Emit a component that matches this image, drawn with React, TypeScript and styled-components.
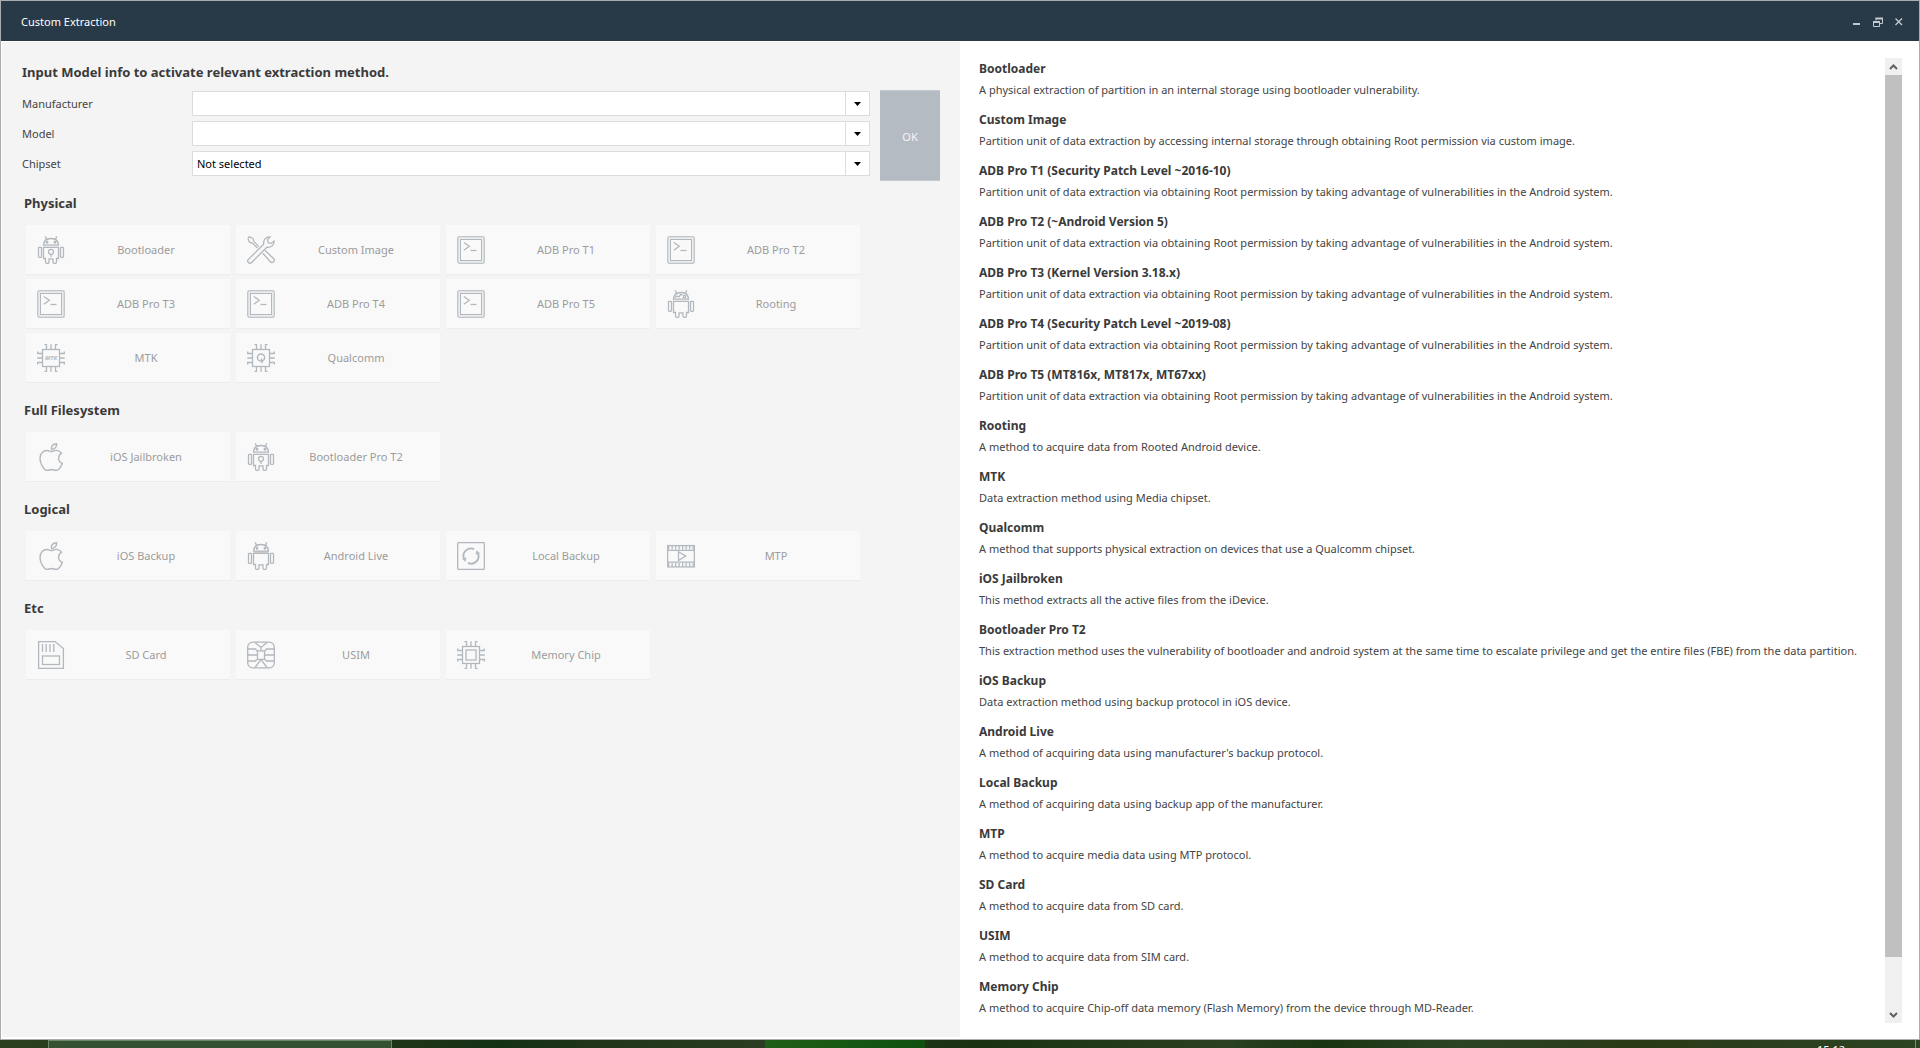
import React from "react";
import styled, { createGlobalStyle } from "styled-components";

const GlobalStyle = createGlobalStyle`
  *, *::before, *::after { box-sizing: border-box; }
  body { margin: 0; }
  body, button, select { font-family: "Noto Sans", "Open Sans", sans-serif; font-size: 11px; }
  h1, h2, h3, p, dl, dt, dd { margin: 0; }
`;

/* ---------- layout ---------- */

const Desktop = styled.div`
  display: flex;
  flex-direction: column;
  height: 100vh;
  overflow: hidden;
`;

const Window = styled.div`
  flex: 1;
  min-height: 0;
  display: flex;
  flex-direction: column;
  border: 1px solid #ababab;
  background: #fff;
`;

const TitleBar = styled.header`
  flex: none;
  display: flex;
  align-items: center;
  justify-content: space-between;
  height: 40px;
  padding: 2px 14px 0 20px;
  background: #283947;
  color: #fff;
`;

const WindowTitle = styled.h1`
  font-size: 11px;
  line-height: 20px;
  font-weight: 400;
`;

const WindowControls = styled.div`
  display: flex;
  gap: 9px;
`;

const ControlButton = styled.button`
  display: flex;
  padding: 0;
  border: 0;
  background: none;
  color: #c6cace;
`;

const Columns = styled.main`
  flex: 1;
  min-height: 0;
  display: grid;
  grid-template-columns: minmax(0, 1fr) minmax(0, 1fr);
  border-top: 1px solid #fff;
`;

const LeftPanel = styled.section`
  margin: 0 0 2px 1px;
  padding: 20px 20px 0 20px;
  background: #f4f4f4;
`;

const RightPanel = styled.section`
  display: flex;
  gap: 6px;
  min-height: 0;
  padding: 16px 17px 16px 19px;
`;

/* ---------- model form ---------- */

const FormTitle = styled.h2`
  font-size: 13px;
  line-height: 20px;
  font-weight: 700;
  color: #3a3a3a;
`;

const ModelForm = styled.form`
  display: flex;
  gap: 10px;
  margin-top: 8px;
`;

const Fields = styled.div`
  flex: 1;
  display: flex;
  flex-direction: column;
  gap: 5px;
  padding: 1px 0;
`;

const Field = styled.div`
  display: grid;
  grid-template-columns: 170px minmax(0, 1fr);
  align-items: center;
`;

const FieldLabel = styled.label`
  line-height: 20px;
  color: #444;
`;

const Combo = styled.div`
  display: grid;
`;

const ComboSelect = styled.select`
  grid-area: 1 / 1;
  appearance: none;
  width: 100%;
  height: 25px;
  padding: 0 30px 0 4px;
  border: 1px solid #dcdcdc;
  border-radius: 0;
  background: #fff;
  color: #000;
`;

const ComboArrow = styled.span`
  grid-area: 1 / 1;
  justify-self: end;
  display: flex;
  align-items: center;
  justify-content: center;
  width: 25px;
  height: 25px;
  border: 1px solid #dcdcdc;
  pointer-events: none;
`;

const OkButton = styled.button`
  width: 60px;
  height: 91px;
  padding: 2px 0 0;
  border: solid #c3c9cf;
  border-width: 1px 0;
  background: #b4bbc3;
  color: #f4f5f6;
`;

/* ---------- method groups ---------- */

const Groups = styled.div`
  display: flex;
  flex-direction: column;
  gap: 17px;
  margin-top: 12px;
  padding-left: 2px;
`;

const GroupTitle = styled.h3`
  font-size: 13px;
  line-height: 20px;
  font-weight: 700;
  color: #3a3a3a;
`;

const Tiles = styled.div`
  display: flex;
  flex-wrap: wrap;
  gap: 4px 6px;
  margin: 12px 0 0 2px;
`;

const Tile = styled.button`
  display: flex;
  align-items: center;
  width: 204px;
  height: 50px;
  padding: 0 3px 0 11px;
  border: 0;
  border-bottom: 1px solid #ececec;
  background: #f9f9f9;
  color: #9c9c9c;
`;

const TileLabel = styled.span`
  flex: 1;
  text-align: center;
  line-height: 20px;
`;

const Glyph = styled.svg`
  flex: none;
  display: block;
  fill: none;
  stroke: #b2b8bd;
  stroke-width: 1.3;
`;

/* ---------- descriptions ---------- */

const DescriptionList = styled.dl`
  flex: 1;
  min-width: 0;
  display: flex;
  flex-direction: column;
  gap: 9px;
  overflow: hidden;
  line-height: 21px;
  color: #444;
  white-space: nowrap;
`;

const Term = styled.dt`
  font-size: 12px;
  font-weight: 700;
  color: #3a3a3a;
`;

const Detail = styled.dd``;

const ScrollBar = styled.div`
  flex: none;
  display: flex;
  flex-direction: column;
  width: 17px;
  background: #f0f0f0;
`;

const ScrollArrow = styled.button`
  flex: none;
  display: flex;
  align-items: center;
  justify-content: center;
  height: 17px;
  padding: 0;
  border: 0;
  background: #f0f0f0;
`;

const ScrollTrack = styled.div`
  flex: 1;
  display: grid;
  grid-template-rows: 18fr 1fr;
`;

const ScrollThumb = styled.div`
  background: #c0c0c0;
`;

/* ---------- taskbar ---------- */

const TaskBar = styled.footer`
  flex: none;
  display: flex;
  height: 8px;
  overflow: hidden;
  background: linear-gradient(
    90deg,
    #2a3f1c 0%, #1e3416 22%, #123015 26%, #21351a 31%, #2a3d20 40%,
    #1a3112 51%, #2a4020 64%, #193411 69%, #2c4424 76%, #2a3a17 85%, #2c4422 100%
  );
`;

const TaskStart = styled.div`
  width: 48px;
`;

const ActiveTask = styled.div`
  width: 344px;
  border: 1px solid #6c8869;
  border-bottom: 0;
  background: #345232;
`;

const TaskGap = styled.div`
  width: 373px;
`;

const ProgressTask = styled.div`
  width: 160px;
  background: linear-gradient(90deg, #1f5f17, #0f5010);
`;

const Tray = styled.div`
  flex: 1;
  display: flex;
  justify-content: flex-end;
  gap: 70px;
`;

const Clock = styled.time`
  padding-top: 2px;
  line-height: 16px;
  color: #fff;
`;

const ShowDesktop = styled.div`
  width: 5px;
  border-left: 1px solid #7e8c78;
`;

/* ---------- icons ---------- */

const Icon = ({ children }: { children: React.ReactNode }) => (
  <Glyph width="28" height="28" viewBox="0 0 28 28" aria-hidden="true">
    {children}
  </Glyph>
);

const AndroidShape = () => (
  <>
    <path d="M6.5 9.2C6.7 5 9.6 2.5 14 2.5S21.300 5 21.500 9.200Z" />
    <path d="M8.300.3L9.600 3.400M19.700.3L18.400 3.400" />
    <path d="M6.500 11.300H21.500V22.500H19.500V26Q19.500 27.500 17.800 27.500T16 26V22.800H12V26Q12 27.500 10.300 27.500T8.500 26V22.500H6.500Z" />
    <rect x="1.500" y="11.300" width="3" height="10" rx=".8" />
    <rect x="23.500" y="11.300" width="3" height="10" rx=".8" />
  </>
);

const Eyes = () => (
  <>
    <circle cx="10" cy="6.300" r=".8" />
    <circle cx="18" cy="6.300" r=".8" />
  </>
);

const BootAndroidIcon = () => (
  <Icon>
    <AndroidShape />
    <Eyes />
    <circle cx="14" cy="15.800" r="2.500" />
    <path d="M14 18.300V21" />
  </Icon>
);

const LiveAndroidIcon = () => (
  <Icon>
    <AndroidShape />
    <Eyes />
    <path d="M6.500 10.200H21.500" strokeWidth="1.600" opacity=".6" />
  </Icon>
);

const RootAndroidIcon = () => (
  <Icon>
    <AndroidShape />
    <path d="M8 7.500L10 6L12 7L13.500 4.500L15.500 5" />
    <circle cx="17.500" cy="6.500" r="1.200" />
  </Icon>
);

const ToolsIcon = () => (
  <Icon>
    <path d="M1 1.800L2.200.8L6 2.400L7 5.600L11.800 10.600M15.800 17.300L23.500 25.800A2.100 2.100 0 0 0 26.700 22.700L17.800 14.200M10.500 12L5.200 7.100L2.400 6.200L.9 2.200" />
    <path d="M1.400 23.400L16.700 8.200C16 4.500 18.500.8 22.900.9L20.600 3.800L21.200 6.800L24.200 7.400L27.100 5C27.400 9.300 23.700 12 19.800 11.200L4.600 26.500A2.200 2.200 0 0 1 1.400 23.400Z" />
  </Icon>
);

const TerminalIcon = () => (
  <Icon>
    <rect x=".7" y=".7" width="26.600" height="26.600" rx="2" opacity=".8" />
    <rect x="2" y="2" width="24" height="24" strokeWidth="1.400" opacity=".25" />
    <rect x="3.500" y="3.500" width="21" height="21" strokeWidth="1" />
    <path d="M6.800 6.500L12.300 10.300L6.800 14.200" strokeWidth="1.300" />
    <path d="M13.500 14.500H19.500" strokeWidth="1.300" />
  </Icon>
);

const ChipShape = () => (
  <>
    <rect x="5.500" y="5.500" width="17" height="17" />
    <path d="M7.500.7H9.500V5.500M14 .3V5.500M20.500.7H18.500V5.500M7.500 27.300H9.500V22.500M14 27.700V22.500M20.500 27.300H18.500V22.500" />
    <path d="M.7 7.500V9.500H5.500M.3 14H5.500M.7 20.500V18.500H5.500M27.300 7.500V9.500H22.500M27.700 14H22.500M27.300 20.500V18.500H22.500" />
  </>
);

const ChipLettering = styled.text`
  font: italic 700 6px "Noto Sans", sans-serif;
  fill: #b2b8bd;
  stroke: none;
  text-anchor: middle;
`;

const MtkIcon = () => (
  <Icon>
    <ChipShape />
    <ChipLettering x="14" y="16">MTK</ChipLettering>
  </Icon>
);

const QualcommIcon = () => (
  <Icon>
    <ChipShape />
    <circle cx="14" cy="13.500" r="3.600" strokeWidth="1.500" />
    <path d="M14.300 14.500L15.500 19" strokeWidth="1.500" />
  </Icon>
);

const MemoryChipIcon = () => (
  <Icon>
    <ChipShape />
    <rect x="9" y="9" width="10" height="10" />
  </Icon>
);

const AppleIcon = () => (
  <Icon>
    <g transform="translate(2.800 -.8) scale(.059)" strokeWidth="24">
      <path d="M318.700 268.700c-.2-36.700 16.400-64.400 50-84.800-18.800-26.900-47.200-41.700-84.700-44.600-35.500-2.800-74.300 20.700-88.500 20.700-15 0-49.400-19.700-76.400-19.700C63.300 141.200 4 184.800 4 273.500q0 39.300 14.400 81.200c12.800 36.700 59 126.700 107.200 125.200 25.200-.6 43-17.900 75.800-17.900 31.800 0 48.300 17.900 76.400 17.900 48.600-.7 90.400-82.500 102.600-119.300-65.200-30.700-61.700-90-61.700-91.900z" />
      <path d="M200 122C184 70 220 28 284 26C292 78 258 118 200 122z" />
    </g>
  </Icon>
);

const SyncIcon = () => (
  <Icon>
    <rect x=".7" y=".7" width="26.600" height="26.600" rx=".5" />
    <path d="M17.200 7.200A7.500 7.500 0 0 0 6.900 16.500M10.800 20.900A7.500 7.500 0 0 0 21.200 11.800" strokeWidth="1.900" />
    <path d="M5.400 16.700L9.200 15.800L8.300 19.500ZM22.700 11.300L18.900 12.300L19.800 8.700Z" fill="#b2b8bd" strokeWidth=".5" />
  </Icon>
);

const FilmIcon = () => (
  <Icon>
    <rect x=".6" y="3.600" width="26.800" height="21.300" />
    <path d="M0 8.300H28M0 20.200H28" />
    <path d="M1 5.800H27M1 22.800H27" strokeWidth="3.600" strokeDasharray="1.300 2.200" />
    <path d="M11.500 9.800L18.700 14.100L11.500 18.500Z" />
  </Icon>
);

const SdCardIcon = () => (
  <Icon>
    <path d="M1.600.6H18L26.400 7.600V27.400H1.600Z" />
    <path d="M5.500 3V11M9.200 3V11M13 3V11M16.800 3V11" />
    <rect x="5.500" y="15" width="17" height="8.500" />
  </Icon>
);

const SimIcon = () => (
  <Icon>
    <rect x=".7" y="1.200" width="26.600" height="25.600" rx="5" />
    <path d="M8 1.500L14 6.500L20 1.500M14 6.500V9.500M8 26.500L14 18.500L20 26.500M.7 8H8.500L10.500 10.500V18L8.500 20H.7M27.300 8H19.500L17.500 10.500V18L19.500 20H27.300M.7 14H10.500M27.300 14H17.500M10.500 9.800H17.500M10.500 18.300H17.500" />
  </Icon>
);

/* ---------- data ---------- */

type Method = { label: string; icon: React.ComponentType };

const groups: { title: string; methods: Method[] }[] = [
  {
    title: "Physical",
    methods: [
      { label: "Bootloader", icon: BootAndroidIcon },
      { label: "Custom Image", icon: ToolsIcon },
      { label: "ADB Pro T1", icon: TerminalIcon },
      { label: "ADB Pro T2", icon: TerminalIcon },
      { label: "ADB Pro T3", icon: TerminalIcon },
      { label: "ADB Pro T4", icon: TerminalIcon },
      { label: "ADB Pro T5", icon: TerminalIcon },
      { label: "Rooting", icon: RootAndroidIcon },
      { label: "MTK", icon: MtkIcon },
      { label: "Qualcomm", icon: QualcommIcon },
    ],
  },
  {
    title: "Full Filesystem",
    methods: [
      { label: "iOS Jailbroken", icon: AppleIcon },
      { label: "Bootloader Pro T2", icon: BootAndroidIcon },
    ],
  },
  {
    title: "Logical",
    methods: [
      { label: "iOS Backup", icon: AppleIcon },
      { label: "Android Live", icon: LiveAndroidIcon },
      { label: "Local Backup", icon: SyncIcon },
      { label: "MTP", icon: FilmIcon },
    ],
  },
  {
    title: "Etc",
    methods: [
      { label: "SD Card", icon: SdCardIcon },
      { label: "USIM", icon: SimIcon },
      { label: "Memory Chip", icon: MemoryChipIcon },
    ],
  },
];

const viaRoot =
  "Partition unit of data extraction via obtaining Root permission by taking advantage of vulnerabilities in the Android system.";

const descriptions: [string, string][] = [
  ["Bootloader", "A physical extraction of partition in an internal storage using bootloader vulnerability."],
  ["Custom Image", "Partition unit of data extraction by accessing internal storage through obtaining Root permission via custom image."],
  ["ADB Pro T1 (Security Patch Level ~2016-10)", viaRoot],
  ["ADB Pro T2 (~Android Version 5)", viaRoot],
  ["ADB Pro T3 (Kernel Version 3.18.x)", viaRoot],
  ["ADB Pro T4 (Security Patch Level ~2019-08)", viaRoot],
  ["ADB Pro T5 (MT816x, MT817x, MT67xx)", viaRoot],
  ["Rooting", "A method to acquire data from Rooted Android device."],
  ["MTK", "Data extraction method using Media chipset."],
  ["Qualcomm", "A method that supports physical extraction on devices that use a Qualcomm chipset."],
  ["iOS Jailbroken", "This method extracts all the active files from the iDevice."],
  ["Bootloader Pro T2", "This extraction method uses the vulnerability of bootloader and android system at the same time to escalate privilege and get the entire files (FBE) from the data partition."],
  ["iOS Backup", "Data extraction method using backup protocol in iOS device."],
  ["Android Live", "A method of acquiring data using manufacturer's backup protocol."],
  ["Local Backup", "A method of acquiring data using backup app of the manufacturer."],
  ["MTP", "A method to acquire media data using MTP protocol."],
  ["SD Card", "A method to acquire data from SD card."],
  ["USIM", "A method to acquire data from SIM card."],
  ["Memory Chip", "A method to acquire Chip-off data memory (Flash Memory) from the device through MD-Reader."],
];

const fields = [
  { id: "manufacturer", label: "Manufacturer", value: "" },
  { id: "model", label: "Model", value: "" },
  { id: "chipset", label: "Chipset", value: "Not selected" },
];

export default function App() {
  return (
    <Desktop>
      <GlobalStyle />
      <Window>
        <TitleBar>
          <WindowTitle>Custom Extraction</WindowTitle>
          <WindowControls>
            <ControlButton type="button" aria-label="Minimize">
              <svg width="12" height="12" viewBox="0 0 12 12"><path d="M2 7h7v2H2z" fill="currentColor" /></svg>
            </ControlButton>
            <ControlButton type="button" aria-label="Restore">
              <svg width="12" height="12" viewBox="0 0 12 12" fill="none" stroke="currentColor">
                <path d="M4 4.500V2.500H10.500V7.500H8M1.500 6H7.500V10.500H1.500Z" />
                <path d="M3.500 2.500H11M1 6H8" strokeWidth="2" />
              </svg>
            </ControlButton>
            <ControlButton type="button" aria-label="Close">
              <svg width="12" height="12" viewBox="0 0 12 12" fill="none" stroke="currentColor" strokeWidth="1.300">
                <path d="M2.500 2.500L9 9M9 2.500L2.500 9" />
              </svg>
            </ControlButton>
          </WindowControls>
        </TitleBar>
        <Columns>
          <LeftPanel>
            <FormTitle>Input Model info to activate relevant extraction method.</FormTitle>
            <ModelForm onSubmit={(e) => e.preventDefault()}>
              <Fields>
                {fields.map((f) => (
                  <Field key={f.id}>
                    <FieldLabel htmlFor={f.id}>{f.label}</FieldLabel>
                    <Combo>
                      <ComboSelect id={f.id} defaultValue={f.value}>
                        <option value={f.value}>{f.value}</option>
                      </ComboSelect>
                      <ComboArrow>
                        <svg width="7" height="4" viewBox="0 0 7 4"><path d="M0 0H7L3.500 4Z" fill="#000" /></svg>
                      </ComboArrow>
                    </Combo>
                  </Field>
                ))}
              </Fields>
              <OkButton type="submit" disabled>OK</OkButton>
            </ModelForm>
            <Groups>
              {groups.map((g) => (
                <section key={g.title}>
                  <GroupTitle>{g.title}</GroupTitle>
                  <Tiles>
                    {g.methods.map(({ label, icon: MethodIcon }) => (
                      <Tile key={label} type="button" disabled>
                        <MethodIcon />
                        <TileLabel>{label}</TileLabel>
                      </Tile>
                    ))}
                  </Tiles>
                </section>
              ))}
            </Groups>
          </LeftPanel>
          <RightPanel>
            <DescriptionList>
              {descriptions.map(([term, detail]) => (
                <div key={term}>
                  <Term>{term}</Term>
                  <Detail>{detail}</Detail>
                </div>
              ))}
            </DescriptionList>
            <ScrollBar>
              <ScrollArrow type="button" aria-label="Scroll up">
                <svg width="9" height="6" viewBox="0 0 9 6" fill="none" stroke="#606060" strokeWidth="2"><path d="M1 5L4.500 1.500L8 5" /></svg>
              </ScrollArrow>
              <ScrollTrack>
                <ScrollThumb />
              </ScrollTrack>
              <ScrollArrow type="button" aria-label="Scroll down">
                <svg width="9" height="6" viewBox="0 0 9 6" fill="none" stroke="#606060" strokeWidth="2"><path d="M1 1L4.500 4.500L8 1" /></svg>
              </ScrollArrow>
            </ScrollBar>
          </RightPanel>
        </Columns>
      </Window>
      <TaskBar>
        <TaskStart />
        <ActiveTask />
        <TaskGap />
        <ProgressTask />
        <Tray>
          <Clock>15:12</Clock>
          <ShowDesktop />
        </Tray>
      </TaskBar>
    </Desktop>
  );
}
